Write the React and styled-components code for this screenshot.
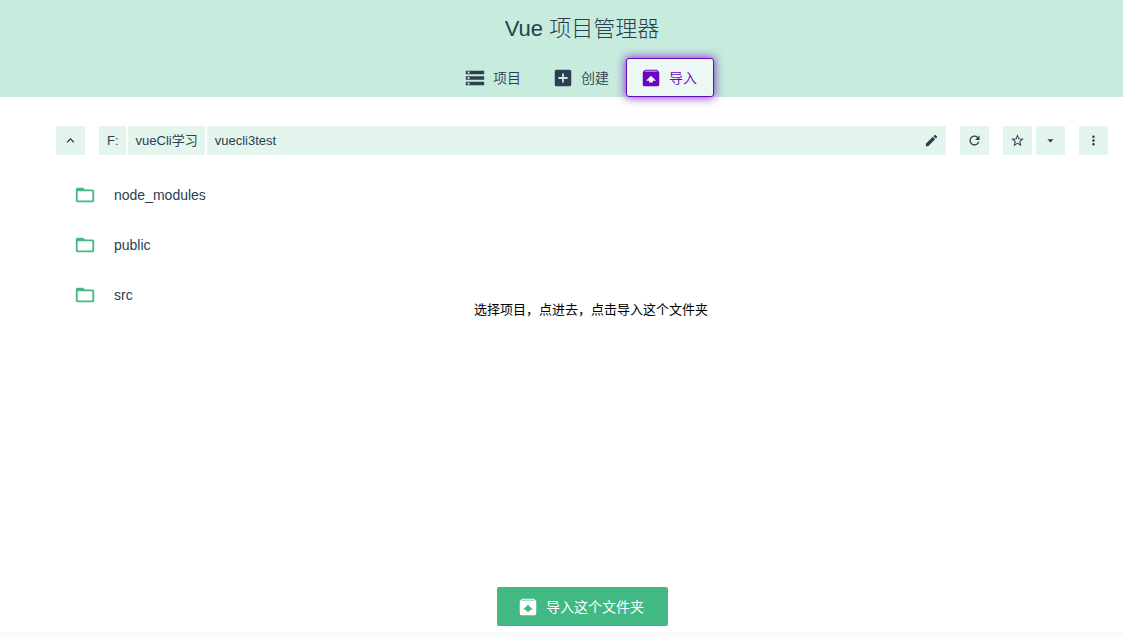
import React from 'react';
import styled, { createGlobalStyle } from 'styled-components';
import {
  MdStorage,
  MdAddBox,
  MdUnarchive,
  MdKeyboardArrowUp,
  MdEdit,
  MdRefresh,
  MdStarBorder,
  MdArrowDropDown,
  MdMoreVert,
  MdFolderOpen
} from 'react-icons/md';

const colors = {
  text: '#2c3e50',
  green: '#42b983',
  header: '#c7ebdd',
  field: '#e3f5ed',
  accent: '#6806c1'
};

const GlobalStyle = createGlobalStyle`
  * {
    box-sizing: border-box;
  }

  body {
    margin: 0;
    background: #ffffff;
    color: ${colors.text};
    font-family: "Liberation Sans", "Noto Sans CJK SC", sans-serif;
    font-size: 14px;
    line-height: 20px;
  }

  button {
    font: inherit;
    color: inherit;
    border: none;
    padding: 0;
    cursor: pointer;
  }
`;

const Page = styled.div`
  min-height: 100vh;
  display: flex;
  flex-direction: column;
`;

const Header = styled.header`
  display: flex;
  flex-direction: column;
  align-items: center;
  padding-left: 41px;
  background: ${colors.header};
`;

const Title = styled.h1`
  margin: 0;
  height: 58px;
  line-height: 58px;
  font-size: 22px;
  font-weight: 300;
`;

const Tabs = styled.nav`
  display: flex;
`;

const Tab = styled.button`
  width: 88px;
  height: 39px;
  display: flex;
  align-items: center;
  justify-content: center;
  gap: 7px;
  border-radius: 3px;
  background: ${props => (props.$active ? '#edf8f4' : 'transparent')};
  box-shadow: ${props => (props.$active ? '0 0 10px 1px rgba(104, 6, 193, 0.75)' : 'none')};

  && {
    padding: 0 3px 0 0;
    font-weight: 350;
    color: ${props => (props.$active ? colors.accent : colors.text)};
    border: 1px solid ${props => (props.$active ? colors.accent : 'transparent')};
  }
`;

const Main = styled.main`
  position: relative;
  flex: 1;
  display: flex;
  flex-direction: column;
  padding: 29px 15px 0 56px;
`;

const Toolbar = styled.div`
  display: flex;
  gap: 14px;
`;

const ButtonGroup = styled.div`
  display: flex;
  gap: 4px;
`;

const IconButton = styled.button`
  width: 29px;
  height: 29px;
  display: flex;
  align-items: center;
  justify-content: center;
  background: ${colors.field};
`;

const PathBar = styled.div`
  flex: 1;
  display: flex;
  gap: 2px;
`;

const PathPart = styled.button`
  height: 29px;
  background: ${colors.field};

  && {
    padding: 0 7px 0 8px;
    font-size: 13px;
    line-height: 29px;
  }
`;

const CurrentPath = styled.div`
  flex: 1;
  display: flex;
  background: ${colors.field};

  ${PathPart}, ${IconButton} {
    background: transparent;
  }

  ${IconButton} {
    margin-left: auto;
  }
`;

const FolderList = styled.ul`
  flex: 1;
  margin: 15px 0 0;
  padding: 0;
  list-style: none;
`;

const Folder = styled.li`
  height: 50px;
  padding-left: 18px;
  display: flex;
  align-items: center;
  gap: 18px;

  svg {
    color: ${colors.green};
  }
`;

const Hint = styled.p`
  position: absolute;
  top: 203px;
  left: 474px;
  margin: 0;
  color: #000000;
  font-size: 13px;
`;

const Actions = styled.div`
  display: flex;
  justify-content: center;
  padding-bottom: 6px;
`;

const ImportButton = styled.button`
  width: 171px;
  height: 39px;
  display: flex;
  align-items: center;
  justify-content: center;
  gap: 7px;
  border-radius: 2px;
  background: ${colors.green};

  && {
    padding: 0 3px 0 0;
    color: #ffffff;
  }
`;

const StatusBar = styled.footer`
  height: 5px;
  background: #fafafa;
`;

const tabs = [
  { key: 'projects', label: '项目', icon: MdStorage },
  { key: 'create', label: '创建', icon: MdAddBox },
  { key: 'import', label: '导入', icon: MdUnarchive }
];

const parents = ['F:', 'vueCli学习'];
const folders = ['node_modules', 'public', 'src'];

const App = () => {
  return (
    <Page>
      <GlobalStyle />
      <Header>
        <Title>Vue 项目管理器</Title>
        <Tabs>
          {tabs.map(({ key, label, icon: Icon }) => (
            <Tab key={key} $active={key === 'import'}>
              <Icon size={22} />
              {label}
            </Tab>
          ))}
        </Tabs>
      </Header>

      <Main>
        <Toolbar>
          <IconButton aria-label="Up"><MdKeyboardArrowUp size={15} /></IconButton>
          <PathBar>
            {parents.map(name => (
              <PathPart key={name}>{name}</PathPart>
            ))}
            <CurrentPath>
              <PathPart>vuecli3test</PathPart>
              <IconButton aria-label="Edit path"><MdEdit size={15} /></IconButton>
            </CurrentPath>
          </PathBar>
          <IconButton aria-label="Refresh"><MdRefresh size={15} /></IconButton>
          <ButtonGroup>
            <IconButton aria-label="Add to favorites"><MdStarBorder size={15} /></IconButton>
            <IconButton aria-label="Favorites"><MdArrowDropDown size={15} /></IconButton>
          </ButtonGroup>
          <IconButton aria-label="More"><MdMoreVert size={15} /></IconButton>
        </Toolbar>

        <FolderList>
          {folders.map(name => (
            <Folder key={name}>
              <MdFolderOpen size={22} />
              {name}
            </Folder>
          ))}
        </FolderList>

        <Hint>选择项目，点进去，点击导入这个文件夹</Hint>

        <Actions>
          <ImportButton>
            <MdUnarchive size={22} />
            导入这个文件夹
          </ImportButton>
        </Actions>
      </Main>
      <StatusBar />
    </Page>
  );
};

export default App;
